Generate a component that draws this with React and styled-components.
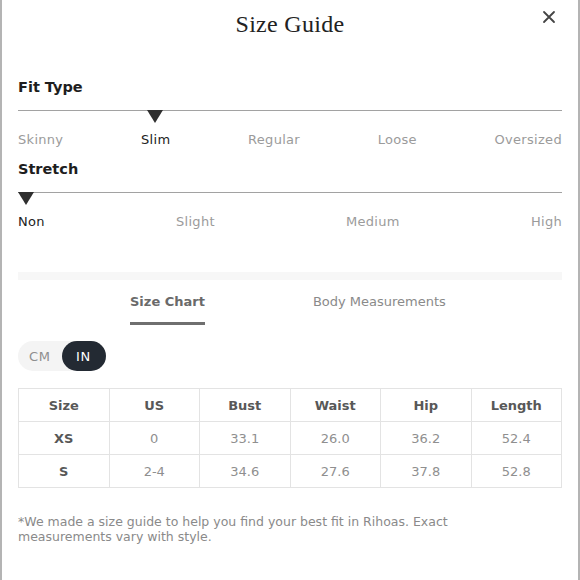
import React from 'react'
import styled, { createGlobalStyle } from 'styled-components';

const Global = createGlobalStyle`
  html, body { margin: 0; padding: 0; background: #fff; }
  body { font-family: "DejaVu Sans", "Noto Sans", sans-serif; }
`;

const Modal = styled.div`
  width: 580px;
  height: 580px;
  box-sizing: border-box;
  border-left: 2px solid #b4b4b4;
  border-right: 2px solid #b4b4b4;
  padding: 0 16px;
  background: #fff;
  overflow: hidden;
`;

const Header = styled.div`
  position: relative;
  height: 48px;
  display: flex;
  align-items: center;
  justify-content: center;
`;

const Title = styled.h2`
  margin: 0;
  font-family: "Liberation Serif", "DejaVu Serif", serif;
  font-weight: 400;
  font-size: 24px;
  color: #222;
  letter-spacing: 0.3px;
`;

const Close = styled.button`
  position: absolute;
  right: 6px;
  top: 10px;
  width: 14px;
  height: 14px;
  padding: 0;
  border: 0;
  background: none;
  cursor: pointer;
`;

const Heading = styled.div`
  font-weight: 700;
  font-size: 14.5px;
  color: #1e1e1e;
  margin-top: ${p => p.$top}px;
  line-height: 18px;
`;

const Track = styled.div`
  position: relative;
  height: 1px;
  background: #a2a2a2;
  margin-top: ${p => p.$top}px;
`;

const Marker = styled.div`
  position: absolute;
  top: 0;
  width: 0;
  height: 0;
  border-left: 8px solid transparent;
  border-right: 8px solid transparent;
  border-top: 13px solid #2f2f2f;
`;

const Labels = styled.div`
  display: flex;
  justify-content: space-between;
  margin-top: ${p => p.$top}px;
  line-height: 16px;
`;

const Label = styled.span`
  font-size: 13px;
  letter-spacing: 0.3px;
  color: ${p => (p.$active ? '#222' : '#9b9b9b')};
`;

const Divider = styled.div`
  height: 8px;
  background: #f7f7f7;
  margin-top: 42px;
`;

const Tabs = styled.div`
  display: flex;
  padding-left: 112px;
  gap: 108px;
  margin-top: 14px;
`;

const Tab = styled.div`
  font-size: 13px;
  font-weight: ${p => (p.$active ? 700 : 400)};
  color: ${p => (p.$active ? '#6a6a6a' : '#8a8a8a')};
  padding-bottom: 12px;
  border-bottom: 3px solid ${p => (p.$active ? '#6f6f6f' : 'transparent')};
  line-height: 16px;
`;

const Toggle = styled.div`
  display: inline-flex;
  align-items: center;
  margin-top: 16px;
  height: 30px;
  border-radius: 15px;
  background: #f4f4f4;
  padding-left: 11px;
  gap: 11px;
`;

const Unit = styled.span`
  display: flex;
  align-items: center;
  justify-content: center;
  height: 30px;
  font-size: 13px;
  letter-spacing: 0.6px;
  color: ${p => (p.$active ? '#fff' : '#8e8e8e')};
  background: ${p => (p.$active ? '#232a33' : 'transparent')};
  border-radius: 15px;
  width: ${p => (p.$active ? '44px' : 'auto')};
`;

const Table = styled.table`
  width: 100%;
  margin-top: 17px;
  border-collapse: collapse;
  table-layout: fixed;
  border: 1px solid #e3e3e3;
`;

const Cell = styled.td`
  height: 32px;
  padding: 0;
  text-align: center;
  font-size: 13px;
  border: 1px solid #e3e3e3;
  font-weight: ${p => (p.$bold ? 700 : 400)};
  color: ${p => (p.$bold ? '#585858' : '#8f8f8f')};
`;

const Note = styled.p`
  margin: 26px 0 0;
  width: 470px;
  font-size: 12.5px;
  line-height: 15px;
  color: #8a8a8a;
`;

const fits = ['Skinny', 'Slim', 'Regular', 'Loose', 'Oversized'];
const stretches = ['Non', 'Slight', 'Medium', 'High'];
const cols = ['Size', 'US', 'Bust', 'Waist', 'Hip', 'Length'];
const rows = [
  ['XS', '0', '33.1', '26.0', '36.2', '52.4'],
  ['S', '2-4', '34.6', '27.6', '37.8', '52.8'],
];

function App() {
  return (
    <Modal>
      <Global />
      <Header>
        <Title>Size Guide</Title>
        <Close aria-label="Close">
          <svg width="14" height="14" viewBox="0 0 14 14">
            <path d="M2 2 L12 12 M12 2 L2 12" stroke="#444" strokeWidth="1.8" strokeLinecap="round" />
          </svg>
        </Close>
      </Header>

      <Heading $top={30}>Fit Type</Heading>
      <Track $top={14}>
        <Marker style={{ left: 'calc(25% - 7px)' }} />
      </Track>
      <Labels $top={21}>
        {fits.map(f => (
          <Label key={f} $active={f === 'Slim'}>{f}</Label>
        ))}
      </Labels>

      <Heading $top={12}>Stretch</Heading>
      <Track $top={14}>
        <Marker style={{ left: 0 }} />
      </Track>
      <Labels $top={21}>
        {stretches.map(s => (
          <Label key={s} $active={s === 'Non'}>{s}</Label>
        ))}
      </Labels>

      <Divider />

      <Tabs>
        <Tab $active>Size Chart</Tab>
        <Tab>Body Measurements</Tab>
      </Tabs>

      <Toggle>
        <Unit>CM</Unit>
        <Unit $active>IN</Unit>
      </Toggle>

      <Table>
        <tbody>
          <tr>
            {cols.map(c => (
              <Cell key={c} $bold>{c}</Cell>
            ))}
          </tr>
          {rows.map(r => (
            <tr key={r[0]}>
              {r.map((v, i) => (
                <Cell key={i} $bold={i === 0}>{v}</Cell>
              ))}
            </tr>
          ))}
        </tbody>
      </Table>

      <Note>
        *We made a size guide to help you find your best fit in Rihoas. Exact measurements vary with style.
      </Note>
    </Modal>
  )
}

export default App
